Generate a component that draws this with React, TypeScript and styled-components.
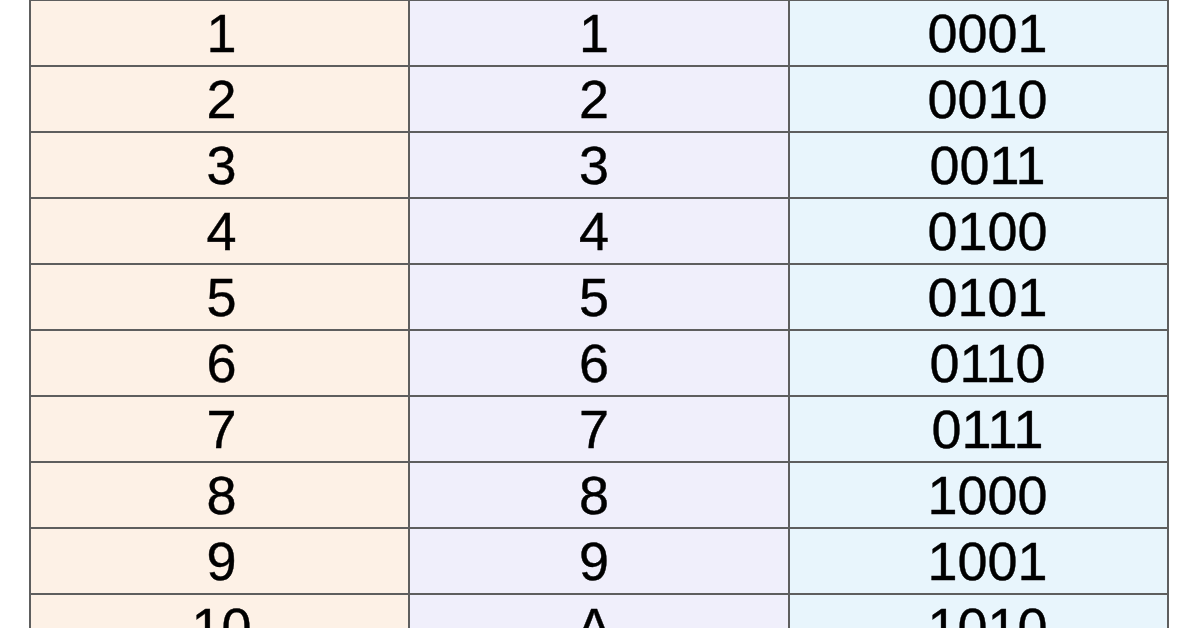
import React from "react";
import styled, { createGlobalStyle } from "styled-components";

const GlobalStyle = createGlobalStyle`
  html, body {
    margin: 0;
    padding: 0;
    background: #ffffff;
    overflow: hidden;
  }
`;

const Page = styled.div`
  width: 1196px;
  height: 628px;
  overflow: hidden;
  padding-left: 29px;
  box-sizing: border-box;
`;

const Table = styled.div`
  display: grid;
  grid-template-columns: 379px 380px 379px;
  width: max-content;
  border-left: 2px solid #5e5e5e;
  border-top: 2px solid #5e5e5e;
  margin-top: -1px;
`;

// $shift nudges the text off centre, as the scanned table does
const Cell = styled.div<{ $bg: string; $shift: number }>`
  background: ${(p) => p.$bg};
  border-right: 2px solid #5e5e5e;
  border-bottom: 2px solid #5e5e5e;
  height: 64px;
  line-height: 64px;
  text-align: center;
  padding-left: ${(p) => (p.$shift > 0 ? p.$shift * 2 : 0)}px;
  padding-right: ${(p) => (p.$shift < 0 ? -p.$shift * 2 : 0)}px;
  font-family: "Liberation Sans", Arial, sans-serif;
  font-size: 54px;
  color: #000000;
  -webkit-text-stroke: 0.4px #000;
`;

const COLS = [
  { bg: "#fdf1e6", shift: 2 },
  { bg: "#f0effb", shift: -5 },
  { bg: "#e8f5fc", shift: 9 },
];

const rows = [1, 2, 3, 4, 5, 6, 7, 8, 9, 10, 11].map((n) => [
  String(n),
  n.toString(16).toUpperCase(),
  n.toString(2).padStart(4, "0"),
]);

const App = () => {
  return (
    <Page>
      <GlobalStyle />
      <Table>
        {rows.map((row) =>
          row.map((v, i) => (
            <Cell key={row[0] + "-" + i} $bg={COLS[i].bg} $shift={COLS[i].shift}>
              {v}
            </Cell>
          ))
        )}
      </Table>
    </Page>
  );
};

export default App;
